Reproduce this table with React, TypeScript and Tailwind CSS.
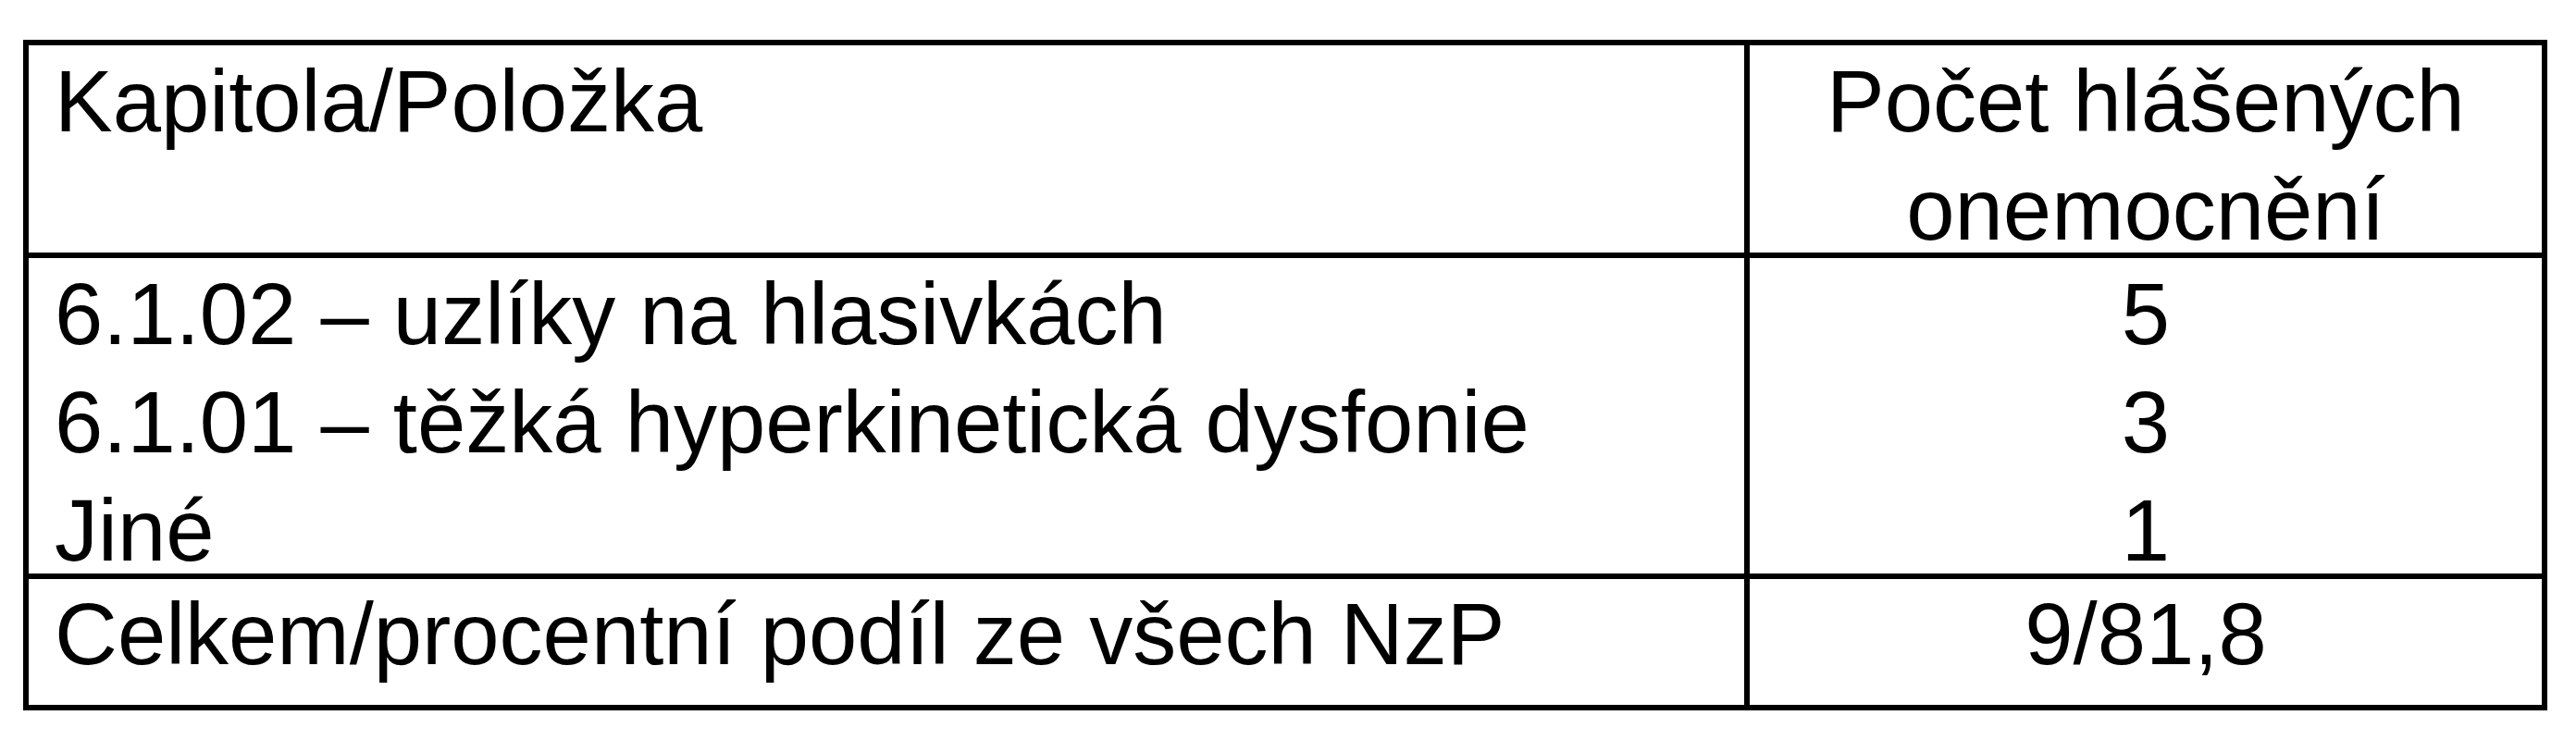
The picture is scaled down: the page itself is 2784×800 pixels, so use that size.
export default function App() {
  const rows = [
    { label: "6.1.02 – uzlíky na hlasivkách", count: "5" },
    { label: "6.1.01 – těžká hyperkinetická dysfonie", count: "3" },
    { label: "Jiné", count: "1" },
  ];

  return (
    <div className="h-[800px] w-[2784px] bg-white pl-[25px] pt-[43px] text-black">
      <div
        className="w-[2728px] border-[6px] border-black text-[94px] leading-[117px]"
        style={{ fontFamily: '"Liberation Sans", Arial, sans-serif' }}
      >
        {/* header */}
        <div className="flex h-[230px] border-b-[6px] border-black">
          <div className="w-[1860px] shrink-0 border-r-[6px] border-black pl-[28px] pt-[2px]">
            Kapitola/Položka
          </div>
          <div className="flex-1 pt-[2px] text-center">
            Počet hlášených
            <br />
            onemocnění
          </div>
        </div>

        {/* items */}
        <div className="flex h-[347px] border-b-[6px] border-black">
          <div className="w-[1860px] shrink-0 border-r-[6px] border-black pl-[28px] pt-[2px]">
            {rows.map((r) => (
              <div key={r.label}>{r.label}</div>
            ))}
          </div>
          <div className="flex-1 pt-[2px] text-center">
            {rows.map((r) => (
              <div key={r.label}>{r.count}</div>
            ))}
          </div>
        </div>

        {/* total */}
        <div className="flex h-[136px]">
          <div className="w-[1860px] shrink-0 border-r-[6px] border-black pl-[28px] pt-[1px]">
            Celkem/procentní podíl ze všech NzP
          </div>
          <div className="flex-1 pt-[1px] text-center">9/81,8</div>
        </div>
      </div>
    </div>
  );
}
